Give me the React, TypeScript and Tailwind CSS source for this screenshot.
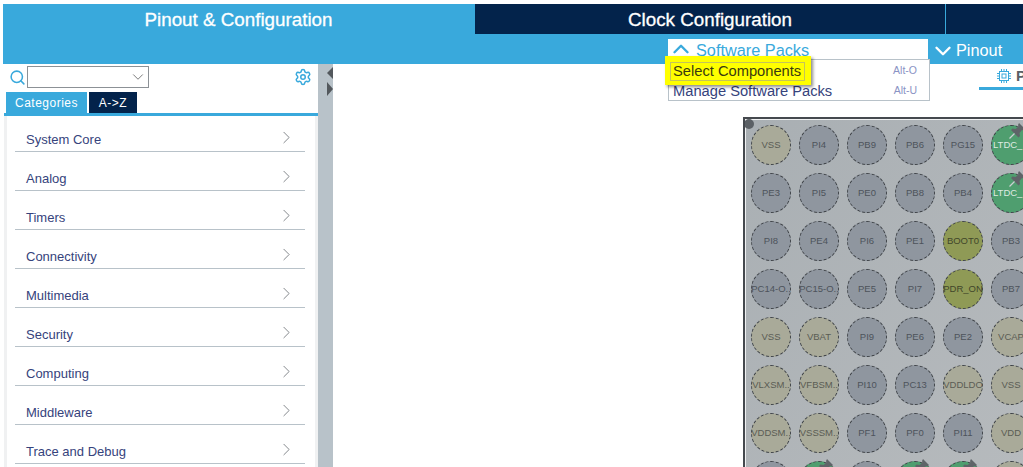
import { ChevronDown, ChevronRight, ChevronUp, Search, Settings } from 'lucide-react';

const categories = ['System Core', 'Analog', 'Timers', 'Connectivity', 'Multimedia', 'Security', 'Computing', 'Middleware', 'Trace and Debug'];

type Kind = 'gray' | 'beige' | 'olive' | 'green';

// pin grid, row by row, as it shows in the chip view
const pins: [string, Kind][] = [
    ['VSS', 'beige'], ['PI4', 'gray'], ['PB9', 'gray'], ['PB6', 'gray'], ['PG15', 'gray'], ['LTDC_', 'green'],
    ['PE3', 'gray'], ['PI5', 'gray'], ['PE0', 'gray'], ['PB8', 'gray'], ['PB4', 'gray'], ['LTDC_', 'green'],
    ['PI8', 'gray'], ['PE4', 'gray'], ['PI6', 'gray'], ['PE1', 'gray'], ['BOOT0', 'olive'], ['PB3', 'gray'],
    ['PC14-O..', 'gray'], ['PC15-O..', 'gray'], ['PE5', 'gray'], ['PI7', 'gray'], ['PDR_ON', 'olive'], ['PB7', 'gray'],
    ['VSS', 'beige'], ['VBAT', 'beige'], ['PI9', 'gray'], ['PE6', 'gray'], ['PE2', 'gray'], ['VCAP', 'beige'],
    ['VLXSM..', 'beige'], ['VFBSM..', 'beige'], ['PI10', 'gray'], ['PC13', 'gray'], ['VDDLDO', 'beige'], ['VSS', 'beige'],
    ['VDDSM..', 'beige'], ['VSSSM..', 'beige'], ['PF1', 'gray'], ['PF0', 'gray'], ['PI11', 'gray'], ['VDD', 'beige'],
    ['', 'gray'], ['', 'green'], ['', 'gray'], ['', 'green'], ['', 'green'], ['', 'beige'],
];

const pinColors: Record<Kind, string> = {
    gray: 'bg-[#8f969f] text-[#4d535b]',
    beige: 'bg-[#a9aa99] text-[#5a5c54]',
    olive: 'bg-[#8f9a56] text-[#41462a]',
    green: 'bg-[#4f9e6f] text-[#dfeae2] justify-start pl-[1px]',
};

function Thumbtack() {
    return (
        <svg viewBox="0 0 18 18" className="absolute -top-[4px] left-[16px] w-[18px] h-[18px]">
            <path d="M11 1 17 7 15.5 8.5 14 8 11.5 11 12 14 10.5 15.5 3 8 4.5 6.5 7.5 7 10.5 4.5 10 3Z" fill="#5f6468" />
            <path d="M6.5 11.5 1.5 16.5" stroke="#ccd1d3" strokeWidth="1.2" />
        </svg>
    );
}

function ChipIcon() {
    return (
        <svg viewBox="0 0 14 14" className="w-[14px] h-[14px] shrink-0" fill="none" stroke="#39a9dc">
            <rect x="2.5" y="2.5" width="9" height="9" strokeWidth="1" />
            <rect x="5" y="5" width="4" height="4" strokeWidth="1" />
            <path d="M4.5 0v2M7 0v2M9.5 0v2M4.5 12v2M7 12v2M9.5 12v2M0 4.5h2M0 7h2M0 9.5h2M12 4.5h2M12 7h2M12 9.5h2" strokeWidth="1" />
        </svg>
    );
}

function Pin({ label, kind }: { label: string; kind: Kind }) {
    return (
        <div className={`relative w-[40px] h-[40px] pt-[1px] rounded-full border border-dashed border-[#3f4348] flex items-center justify-center text-[9.5px] whitespace-nowrap ${pinColors[kind]}`}>
            {label}
            {kind === 'green' && <Thumbtack />}
        </div>
    );
}

export default function App() {
    return (
        <div className="relative w-[1023px] h-[467px] overflow-hidden bg-white pt-[4px] pl-[3px] font-['Liberation_Sans',sans-serif]">
            {/* top tabs */}
            <header className="bg-[#39a9dc] h-[60px]">
                <div className="flex h-[30px] text-white text-[18.8px]">
                    <div className="w-[471px] flex items-center justify-center pt-[3px] [-webkit-text-stroke:0.3px_white]">Pinout &amp; Configuration</div>
                    <div className="w-[470px] ml-[1px] bg-[#03234b] flex items-center justify-center pt-[3px] [-webkit-text-stroke:0.3px_white]">Clock Configuration</div>
                    <div className="flex-1 ml-[1px] bg-[#03234b]" />
                </div>
                <div className="relative flex h-[30px] pl-[665px] pt-[5px]">
                    <div className="w-[260px] h-[25px] bg-white flex items-center gap-[2px] text-[#39a9dc] text-[16.3px]">
                        <ChevronUp className="w-[26px] h-[26px] mb-[5px] shrink-0" strokeWidth={2.2} />
                        <span className="pb-[2px]">Software Packs</span>
                    </div>
                    <div className="flex items-center pl-[2px] text-white text-[16.3px]">
                        <ChevronDown className="w-[26px] h-[26px] mb-[2px] shrink-0" strokeWidth={2.2} />
                        <span className="pb-[2px]">Pinout</span>
                    </div>

                    {/* open menu */}
                    <div className="absolute left-[665px] top-[25px] w-[262px] h-[42px] bg-white border border-[#b8c2c9] z-10 pt-[1px] text-[14.7px] text-[#36437c]">
                        <div className="flex h-[20px] items-center justify-between pl-[4px] pr-[12px]">
                            <span>Select Components</span>
                            <span className="text-[10.5px] text-[#8a93c4]">Alt-O</span>
                        </div>
                        <div className="flex h-[20px] items-center justify-between pl-[4px] pr-[12px]">
                            <span>Manage Software Packs</span>
                            <span className="text-[10.5px] text-[#8a93c4]">Alt-U</span>
                        </div>
                    </div>

                    {/* yellow callout over the first entry */}
                    <div className="absolute left-[662px] top-[22px] w-[146px] h-[29px] bg-[#ffff00] z-20 shadow-[2px_2px_3px_rgba(0,0,0,0.45)] p-[6px_6px_4px_5px]">
                        <div className="h-full border border-[#c4c45a] flex items-center pl-[2px] text-[14.7px] text-[#3a3a10] whitespace-nowrap">Select Components</div>
                    </div>
                </div>
            </header>

            <div className="flex h-[403px]">
                {/* side panel */}
                <aside className="w-[315px] shrink-0 flex flex-col">
                    <div className="flex items-center h-[24px] pt-[2px] pl-[6px] pr-[7px]">
                        <Search className="w-[17px] h-[17px] text-[#39a9dc] shrink-0" strokeWidth={2.2} />
                        <div className="ml-[1px] w-[122px] h-[22px] border border-[#8c9196] bg-white flex items-center justify-end pr-[1px]">
                            <ChevronDown className="w-[18px] h-[18px] text-[#777]" strokeWidth={1.3} />
                        </div>
                        <Settings className="ml-auto mr-[-1px] w-[18px] h-[18px] text-[#39a9dc]" strokeWidth={2} />
                    </div>
                    <div className="flex h-[21px] pl-[3px] mt-[4px] gap-[2px] text-[12px] tracking-[0.5px] text-white">
                        <div className="w-[81px] bg-[#39a9dc] flex items-center justify-center">Categories</div>
                        <div className="w-[48px] bg-[#03234b] flex items-center justify-center">A-&gt;Z</div>
                    </div>
                    <div className="h-[3px] ml-[1px] bg-[#39a9dc]" />
                    <div className="flex-1 ml-[1px] pl-[8px] pr-[10px] border-l-[3px] border-r-[3px] border-[#f0f1f2]">
                        {categories.map((name) => (
                            <div key={name} className="h-[39px] first:h-[36px] flex items-end justify-between border-b border-[#b8c2c9] pl-[11px] pr-[8px] pb-[2px] text-[13px] text-[#36437c]">
                                <span>{name}</span>
                                <ChevronRight className="w-[21px] h-[21px] text-[#808488] mb-[1px]" strokeWidth={1.1} />
                            </div>
                        ))}
                    </div>
                </aside>

                {/* splitter */}
                <div className="relative w-[15px] shrink-0 bg-[#b8c2c9]">
                    <div className="absolute right-0 top-[3px] w-0 h-0 border-y-[6px] border-y-transparent border-r-[6px] border-r-[#53585d]" />
                    <div className="absolute right-0 top-[18px] w-0 h-0 border-y-[7px] border-y-transparent border-l-[6px] border-l-[#53585d]" />
                </div>

                {/* chip view */}
                <main className="flex-1 min-w-0 flex flex-col">
                    <div className="h-[26px] pl-[646px] overflow-hidden">
                        <div className="h-full w-[60px] border-b-[3px] border-[#39a9dc] flex items-center pl-[18px] pt-[1px] gap-[5px] text-[15px] text-[#5a5f66] font-bold">
                            <ChipIcon />
                            <span>P</span>
                        </div>
                    </div>
                    <div className="mt-[27px] ml-[410px] flex-1 border-l-2 border-t-2 border-[#45494e] overflow-hidden">
                        <div className="relative h-full border-l border-t border-[#f0f1f2] bg-gradient-to-br from-[#a9afb3] to-[#b6babd] pl-[5px] pt-[5px]">
                            <div className="absolute -left-[2px] -top-[1px] w-[10px] h-[10px] rounded-full bg-[#5b6065]" />
                            <div className="grid grid-cols-[repeat(6,40px)] gap-[8px] w-[300px]">
                                {pins.map(([label, kind], i) => (
                                    <Pin key={i} label={label} kind={kind} />
                                ))}
                            </div>
                        </div>
                    </div>
                </main>
            </div>
        </div>
    );
}
